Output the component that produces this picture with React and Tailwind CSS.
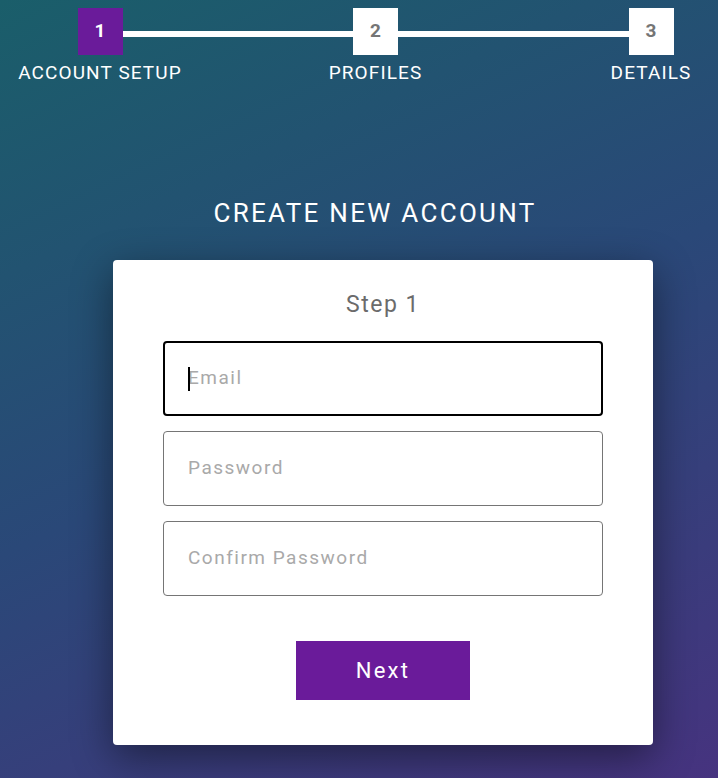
import React from 'react';

const steps = [
  { n: 1, label: 'ACCOUNT SETUP', active: true, cls: 'w-[200px]' },
  { n: 2, label: 'PROFILES', active: false, cls: 'ml-[100px] w-[151px]' },
  { n: 3, label: 'DETAILS', active: false, cls: 'ml-[133px] w-[134px]' },
];

const Field = ({ placeholder, focused }) => (
  <div
    className={`relative flex items-center h-[75px] rounded-[4px] bg-white ${
      focused ? 'border-2 border-black px-[23px]' : 'border border-[#757575] px-[24px]'
    }`}
  >
    {focused && <span className="absolute left-[23px] top-[24px] w-[2px] h-[24px] bg-black" />}
    <input
      type="text"
      readOnly
      placeholder={placeholder}
      className="w-full bg-transparent outline-none text-[19px] tracking-[1.5px] placeholder:text-[#a9a9a9]"
    />
  </div>
);

export default function App() {
  return (
    <div
      className="min-h-[778px] w-full bg-[linear-gradient(155deg,#1a5e6a_0%,#2a4878_50%,#46337f_100%)] text-white"
      style={{ fontFamily: 'Roboto, "Noto Sans", sans-serif' }}
    >
      {/* Stepper */}
      <div className="relative pt-[8px]">
        <div className="absolute left-[110px] right-[60px] top-[31px] h-[6px] bg-white" />
        <div className="relative flex">
          {steps.map((s) => (
            <div key={s.n} className={`flex flex-col items-center ${s.cls}`}>
              <div
                className={`w-[45px] h-[47px] flex items-center justify-center text-[19px] font-bold ${
                  s.active ? 'bg-[#6a1b9a] text-white' : 'bg-white text-[#757575]'
                }`}
              >
                {s.n}
              </div>
              <div className="mt-[7px] text-[19px] leading-[22px] tracking-[1.1px] whitespace-nowrap">{s.label}</div>
            </div>
          ))}
        </div>
      </div>

      {/* Title */}
      <h1 className="mt-[114px] pl-[32px] text-center text-[26px] leading-[30px] tracking-[2.3px]">
        CREATE NEW ACCOUNT
      </h1>

      {/* Card */}
      <div className="ml-[113px] mt-[32px] w-[540px] h-[485px] bg-white rounded-[4px] shadow-[0_12px_40px_rgba(0,0,0,0.45)] px-[50px] pt-[31px]">
        <div className="text-center text-[23px] leading-[28px] text-[#6b6b6b] tracking-[1.5px]">Step 1</div>
        <div className="mt-[22px] flex flex-col gap-[15px]">
          <Field placeholder="Email" focused />
          <Field placeholder="Password" />
          <Field placeholder="Confirm Password" />
        </div>
        <div className="mt-[45px] flex justify-center">
          <button className="w-[174px] h-[59px] bg-[#6a1b9a] text-white text-[22px] tracking-[2.2px]">
            Next
          </button>
        </div>
      </div>
    </div>
  );
}
